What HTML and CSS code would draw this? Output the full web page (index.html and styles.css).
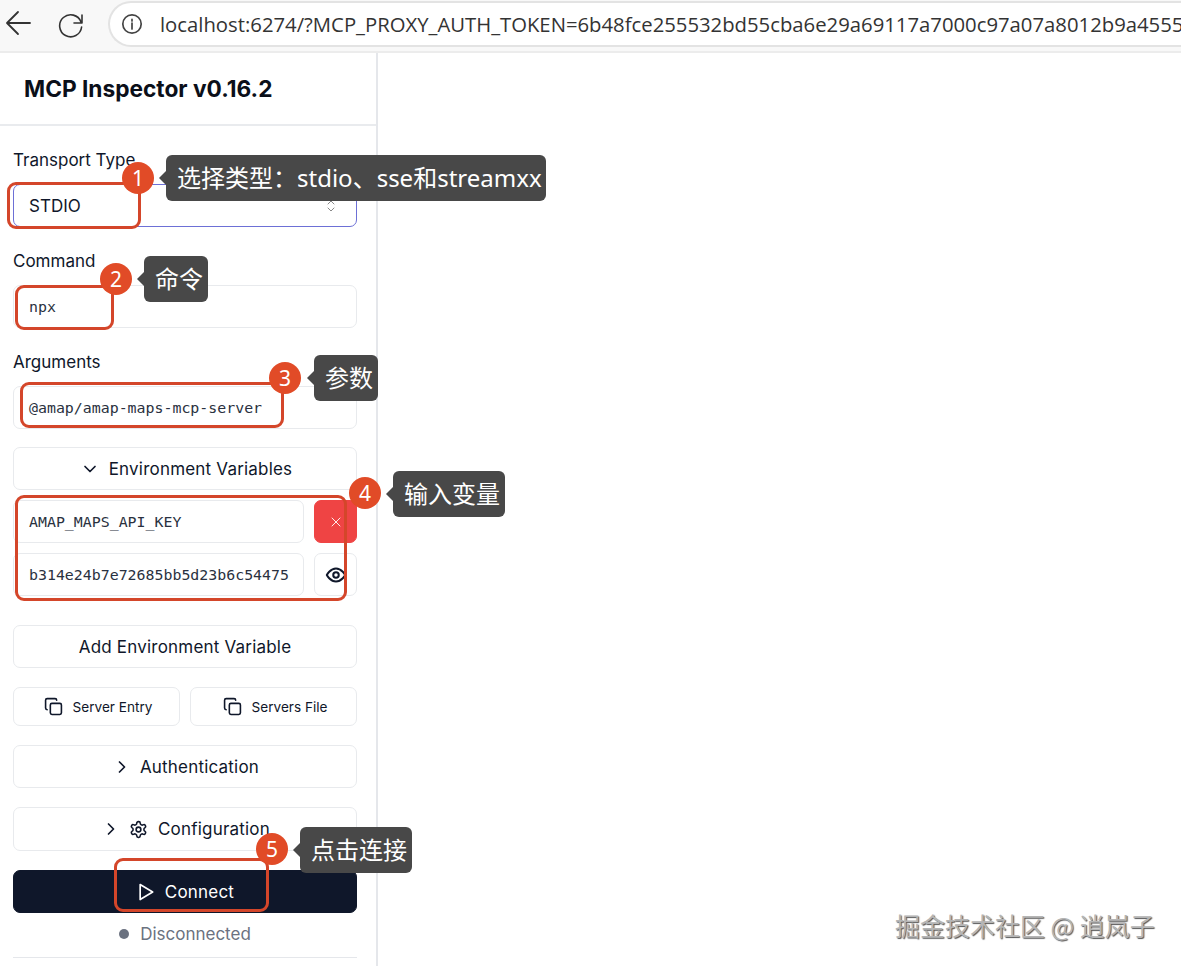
FILE: index.html
```html
<!DOCTYPE html>
<html lang="en">
<head>
    <meta charset="UTF-8">
    <meta name="viewport" content="width=device-width, initial-scale=1.0">
    <title>MCP Inspector</title>
    <link rel="stylesheet" href="styles.css">
</head>
<body>
    <div class="browser-bar">
        <svg class="nav-icon" width="32" height="32" viewBox="0 0 32 32"><path d="M30 24H8M18 13 7 24l11 11" transform="translate(0 -8)"/></svg>
        <svg class="nav-icon reload" width="32" height="32" viewBox="0 0 32 32"><path d="M26 9v8h-8M25 16a11 11 0 1 0 .6 5" transform="translate(0 -1)"/></svg>
        <div class="address">
            <svg class="info" width="22" height="22" viewBox="0 0 22 22"><circle cx="11" cy="11" r="9.2"/><path d="M11 10v6M11 6.4v1.6"/></svg>
            <span class="url">localhost:6274/?MCP_PROXY_AUTH_TOKEN=6b48fce255532bd55cba6e29a69117a7000c97a07a8012b9a4555</span>
        </div>
    </div>

    <div class="page">
        <aside class="sidebar">
            <div class="sidebar-head">MCP Inspector v0.16.2</div>
            <div class="sidebar-body">
                <div class="form-group">
                    <label>Transport Type</label>
                    <div class="field select">
                        <span>STDIO</span>
                        <svg width="12" height="18" viewBox="0 0 12 18"><path d="m3 7 3-3 3 3M3 11l3 3 3-3"/></svg>
                    </div>
                </div>
                <div class="form-group">
                    <label>Command</label>
                    <div class="field mono">npx</div>
                </div>
                <div class="form-group last">
                    <label>Arguments</label>
                    <div class="field mono">@amap/amap-maps-mcp-server</div>
                </div>
                <div class="button env-toggle">
                    <svg class="chev" width="16" height="16" viewBox="0 0 16 16"><path d="m3 5.5 5 5 5-5"/></svg>
                    Environment Variables
                </div>
                <div class="env-rows">
                    <div class="env-row">
                        <div class="field mono">AMAP_MAPS_API_KEY</div>
                        <div class="square danger">
                            <svg width="10" height="10" viewBox="0 0 10 10"><path d="m1 1 8 8M9 1 1 9"/></svg>
                        </div>
                    </div>
                    <div class="env-row">
                        <div class="field mono">b314e24b7e72685bb5d23b6c54475</div>
                        <div class="square">
                            <svg class="eye" width="22" height="22" viewBox="0 0 24 24"><path d="M2 12s3.6-7 10-7 10 7 10 7-3.6 7-10 7-10-7-10-7Z"/><circle cx="12" cy="12" r="3"/></svg>
                        </div>
                    </div>
                </div>
                <div class="button add-env">Add Environment Variable</div>
                <div class="copy-row">
                    <div class="button copy">
                        <svg width="19" height="19" viewBox="0 0 24 24"><rect x="8" y="8" width="14" height="14" rx="2"/><path d="M4 16a2 2 0 0 1-2-2V4a2 2 0 0 1 2-2h10a2 2 0 0 1 2 2"/></svg>
                        Server Entry
                    </div>
                    <div class="button copy">
                        <svg width="19" height="19" viewBox="0 0 24 24"><rect x="8" y="8" width="14" height="14" rx="2"/><path d="M4 16a2 2 0 0 1-2-2V4a2 2 0 0 1 2-2h10a2 2 0 0 1 2 2"/></svg>
                        Servers File
                    </div>
                </div>
                <div class="button auth">
                    <svg class="chev" width="16" height="16" viewBox="0 0 16 16"><path d="m5.5 3 5 5-5 5"/></svg>
                    Authentication
                </div>
                <div class="button config">
                    <svg class="chev" width="16" height="16" viewBox="0 0 16 16"><path d="m5.5 3 5 5-5 5"/></svg>
                    <svg class="gear" width="19" height="19" viewBox="0 0 24 24"><path d="M12.22 2h-.44a2 2 0 0 0-2 2v.18a2 2 0 0 1-1 1.73l-.43.25a2 2 0 0 1-2 0l-.15-.08a2 2 0 0 0-2.73.73l-.22.38a2 2 0 0 0 .73 2.73l.15.1a2 2 0 0 1 1 1.72v.51a2 2 0 0 1-1 1.74l-.15.09a2 2 0 0 0-.73 2.73l.22.38a2 2 0 0 0 2.73.73l.15-.08a2 2 0 0 1 2 0l.43.25a2 2 0 0 1 1 1.73V20a2 2 0 0 0 2 2h.44a2 2 0 0 0 2-2v-.18a2 2 0 0 1 1-1.73l.43-.25a2 2 0 0 1 2 0l.15.08a2 2 0 0 0 2.73-.73l.22-.39a2 2 0 0 0-.73-2.73l-.15-.08a2 2 0 0 1-1-1.74v-.5a2 2 0 0 1 1-1.74l.15-.09a2 2 0 0 0 .73-2.73l-.22-.38a2 2 0 0 0-2.73-.73l-.15.08a2 2 0 0 1-2 0l-.43-.25a2 2 0 0 1-1-1.73V4a2 2 0 0 0-2-2z"/><circle cx="12" cy="12" r="3"/></svg>
                    Configuration
                </div>
                <div class="button connect">
                    <svg width="20" height="20" viewBox="0 0 24 24"><path d="M5 3l15 9-15 9z"/></svg>
                    Connect
                </div>
                <div class="status"><span class="dot"></span>Disconnected</div>
                <div class="rule"></div>
            </div>
        </aside>
    </div>

    <!-- annotations on top of the screenshot -->
    <div class="mark mark-1"></div>
    <div class="mark mark-2"></div>
    <div class="mark mark-3"></div>
    <div class="mark mark-4"></div>
    <div class="mark mark-5"></div>

    <div class="badge badge-1">1</div>
    <div class="badge badge-2">2</div>
    <div class="badge badge-3">3</div>
    <div class="badge badge-4">4</div>
    <div class="badge badge-5">5</div>

    <div class="tip tip-1">选择类型：stdio、sse和streamxx</div>
    <div class="tip tip-2">命令</div>
    <div class="tip tip-3">参数</div>
    <div class="tip tip-4">输入变量</div>
    <div class="tip tip-5">点击连接</div>

    <div class="watermark">掘金技术社区 @ 逍岚子</div>
</body>
</html>
```

FILE: styles.css
```css
* {
    box-sizing: border-box;
}
html, body {
    height: 100%;
}
body {
    margin: 0;
    height: 966px;
    overflow: hidden;
    position: relative;
    background: #fff;
    color: #0f172a;
    font-family: Inter, "Noto Sans", sans-serif;
    font-size: 16px;
    display: flex;
    flex-direction: column;
}
svg {
    fill: none;
    stroke: currentColor;
    stroke-linecap: round;
    stroke-linejoin: round;
    flex: none;
}

/* browser chrome */
.browser-bar {
    height: 53px;
    flex: none;
    display: flex;
    align-items: flex-start;
    background: #f8f8f8;
    border-bottom: 2px solid #ececec;
    overflow: hidden;
}
.nav-icon {
    margin-top: 7px;
    stroke: #333;
    stroke-width: 1.8;
}
.reload {
    margin-left: 24px;
    stroke-width: 1.6;
}
.address {
    margin: 1px 0 0 20px;
    height: 46px;
    flex: 1;
    display: flex;
    align-items: center;
    background: #fff;
    border: 2px solid #e3e3e3;
    border-right: none;
    border-radius: 23px 0 0 23px;
    padding-left: 11px;
    min-width: 0;
}
.info {
    color: #444;
    stroke-width: 1.7;
}
.url {
    margin-left: 17px;
    white-space: nowrap;
    font-family: "Open Sans", sans-serif;
    font-size: 20.3px;
    color: #333;
}

/* sidebar */
.page {
    flex: 1;
    display: flex;
    min-height: 0;
}
.sidebar {
    width: 378px;
    border-right: 2px solid #e5e7eb;
}
.sidebar-head {
    height: 73px;
    padding-left: 24px;
    display: flex;
    align-items: center;
    border-bottom: 2px solid #e9ebee;
    font-size: 22.7px;
    font-weight: 700;
    color: #0b0f19;
}
.sidebar-body {
    padding: 22px 19px 0 13px;
    display: flex;
    flex-direction: column;
}
.form-group {
    margin-bottom: 22px;
}
.form-group.last {
    margin-bottom: 18px;
}
.form-group label {
    display: block;
    height: 24px;
    line-height: 24px;
    margin-bottom: 12px;
    font-size: 17px;
}
.field {
    height: 43px;
    flex: 1;
    min-width: 0;
    display: flex;
    align-items: center;
    padding: 0 15px;
    background: #fff;
    border: 1px solid #e8eaed;
    border-radius: 7px;
}
.select {
    justify-content: space-between;
    border-color: #6d70d6;
    font-size: 17px;
    padding-right: 19px;
}
.select svg {
    color: #888;
    stroke-width: 1;
}
.mono {
    font-family: "DejaVu Sans Mono", monospace;
    font-size: 14.9px;
    white-space: nowrap;
    color: #2a3140;
}
.button {
    height: 43px;
    display: flex;
    align-items: center;
    justify-content: center;
    background: #fff;
    border: 1px solid #e8eaed;
    border-radius: 7px;
    font-size: 17px;
    letter-spacing: 0.2px;
    flex: none;
}
.chev {
    stroke-width: 1.7;
}
.env-toggle {
    gap: 11px;
    padding-left: 4px;
}
.env-rows {
    margin-top: 10px;
    display: flex;
    flex-direction: column;
    gap: 10px;
}
.env-row {
    display: flex;
    gap: 10px;
}
.square {
    width: 43px;
    height: 43px;
    flex: none;
    display: flex;
    align-items: center;
    justify-content: center;
    border: 1px solid #e8eaed;
    border-radius: 7px;
}
.danger {
    background: #ef4444;
    border-color: #ef4444;
    color: #fff;
}
.danger svg {
    stroke-width: 0.9;
}
.eye {
    stroke-width: 2.2;
}
.add-env {
    margin-top: 29px;
}
.copy-row {
    margin-top: 19px;
    display: flex;
    gap: 10px;
}
.copy {
    flex: 1;
    height: 39px;
    gap: 10px;
    padding-left: 3px;
    font-size: 13.6px;
    letter-spacing: 0;
}
.copy svg {
    stroke-width: 2;
}
.auth {
    margin-top: 19px;
    gap: 10px;
    padding-left: 3px;
}
.config {
    margin-top: 19px;
    height: 44px;
    gap: 10px;
    padding-left: 3px;
}
.gear {
    stroke-width: 2;
}
.connect {
    margin-top: 19px;
    gap: 9px;
    background: #0f172a;
    border-color: #0f172a;
    color: #fff;
}
.connect svg {
    stroke-width: 2;
}
.status {
    margin-top: 9px;
    height: 24px;
    display: flex;
    align-items: center;
    justify-content: center;
    gap: 11px;
    color: #6b7280;
    font-size: 17px;
}
.dot {
    width: 10px;
    height: 10px;
    border-radius: 50%;
    background: #6b7280;
}
.rule {
    margin-top: 11px;
    border-top: 1px solid #e5e7eb;
}

/* annotations */
.mark {
    position: absolute;
    border: 3px solid #d4462a;
    border-radius: 9px;
}
.mark-1 { left: 7px; top: 182px; width: 134px; height: 47px; }
.mark-2 { left: 15px; top: 285px; width: 99px; height: 45px; }
.mark-3 { left: 20px; top: 382px; width: 264px; height: 46px; }
.mark-4 { left: 15px; top: 495px; width: 332px; height: 106px; }
.mark-5 { left: 114px; top: 858px; width: 155px; height: 54px; }

.badge {
    position: absolute;
    width: 32px;
    height: 32px;
    border-radius: 50%;
    background: #e14b27;
    color: #fff;
    font-family: "Noto Sans", sans-serif;
    font-size: 21px;
    line-height: 32px;
    text-align: center;
}
.badge-1 { left: 122px; top: 162px; }
.badge-2 { left: 100px; top: 263px; }
.badge-3 { left: 269px; top: 362px; }
.badge-4 { left: 349px; top: 477px; }
.badge-5 { left: 256px; top: 833px; }

.tip {
    position: absolute;
    height: 46px;
    padding: 0 5px 0 11px;
    background: #484848;
    border-radius: 6px;
    color: #fff;
    font-family: "Noto Sans", "Noto Sans CJK SC", sans-serif;
    font-size: 24px;
    line-height: 45px;
    white-space: nowrap;
}
.tip::before {
    content: "";
    position: absolute;
    left: -7px;
    top: 16px;
    border-style: solid;
    border-width: 7px 7px 7px 0;
    border-color: transparent #484848 transparent transparent;
}
.tip-1 { left: 166px; top: 155px; width: 380px; }
.tip-2 { left: 144px; top: 256px; }
.tip-3 { left: 314px; top: 355px; }
.tip-4 { left: 393px; top: 471px; }
.tip-5 { left: 300px; top: 827px; }

.watermark {
    position: absolute;
    left: 895px;
    top: 908px;
    font-family: "Noto Sans CJK SC", sans-serif;
    font-size: 25px;
    line-height: 34px;
    white-space: nowrap;
    color: #b5b5b5;
    text-shadow: 1px 1px 1px #555;
}
```
